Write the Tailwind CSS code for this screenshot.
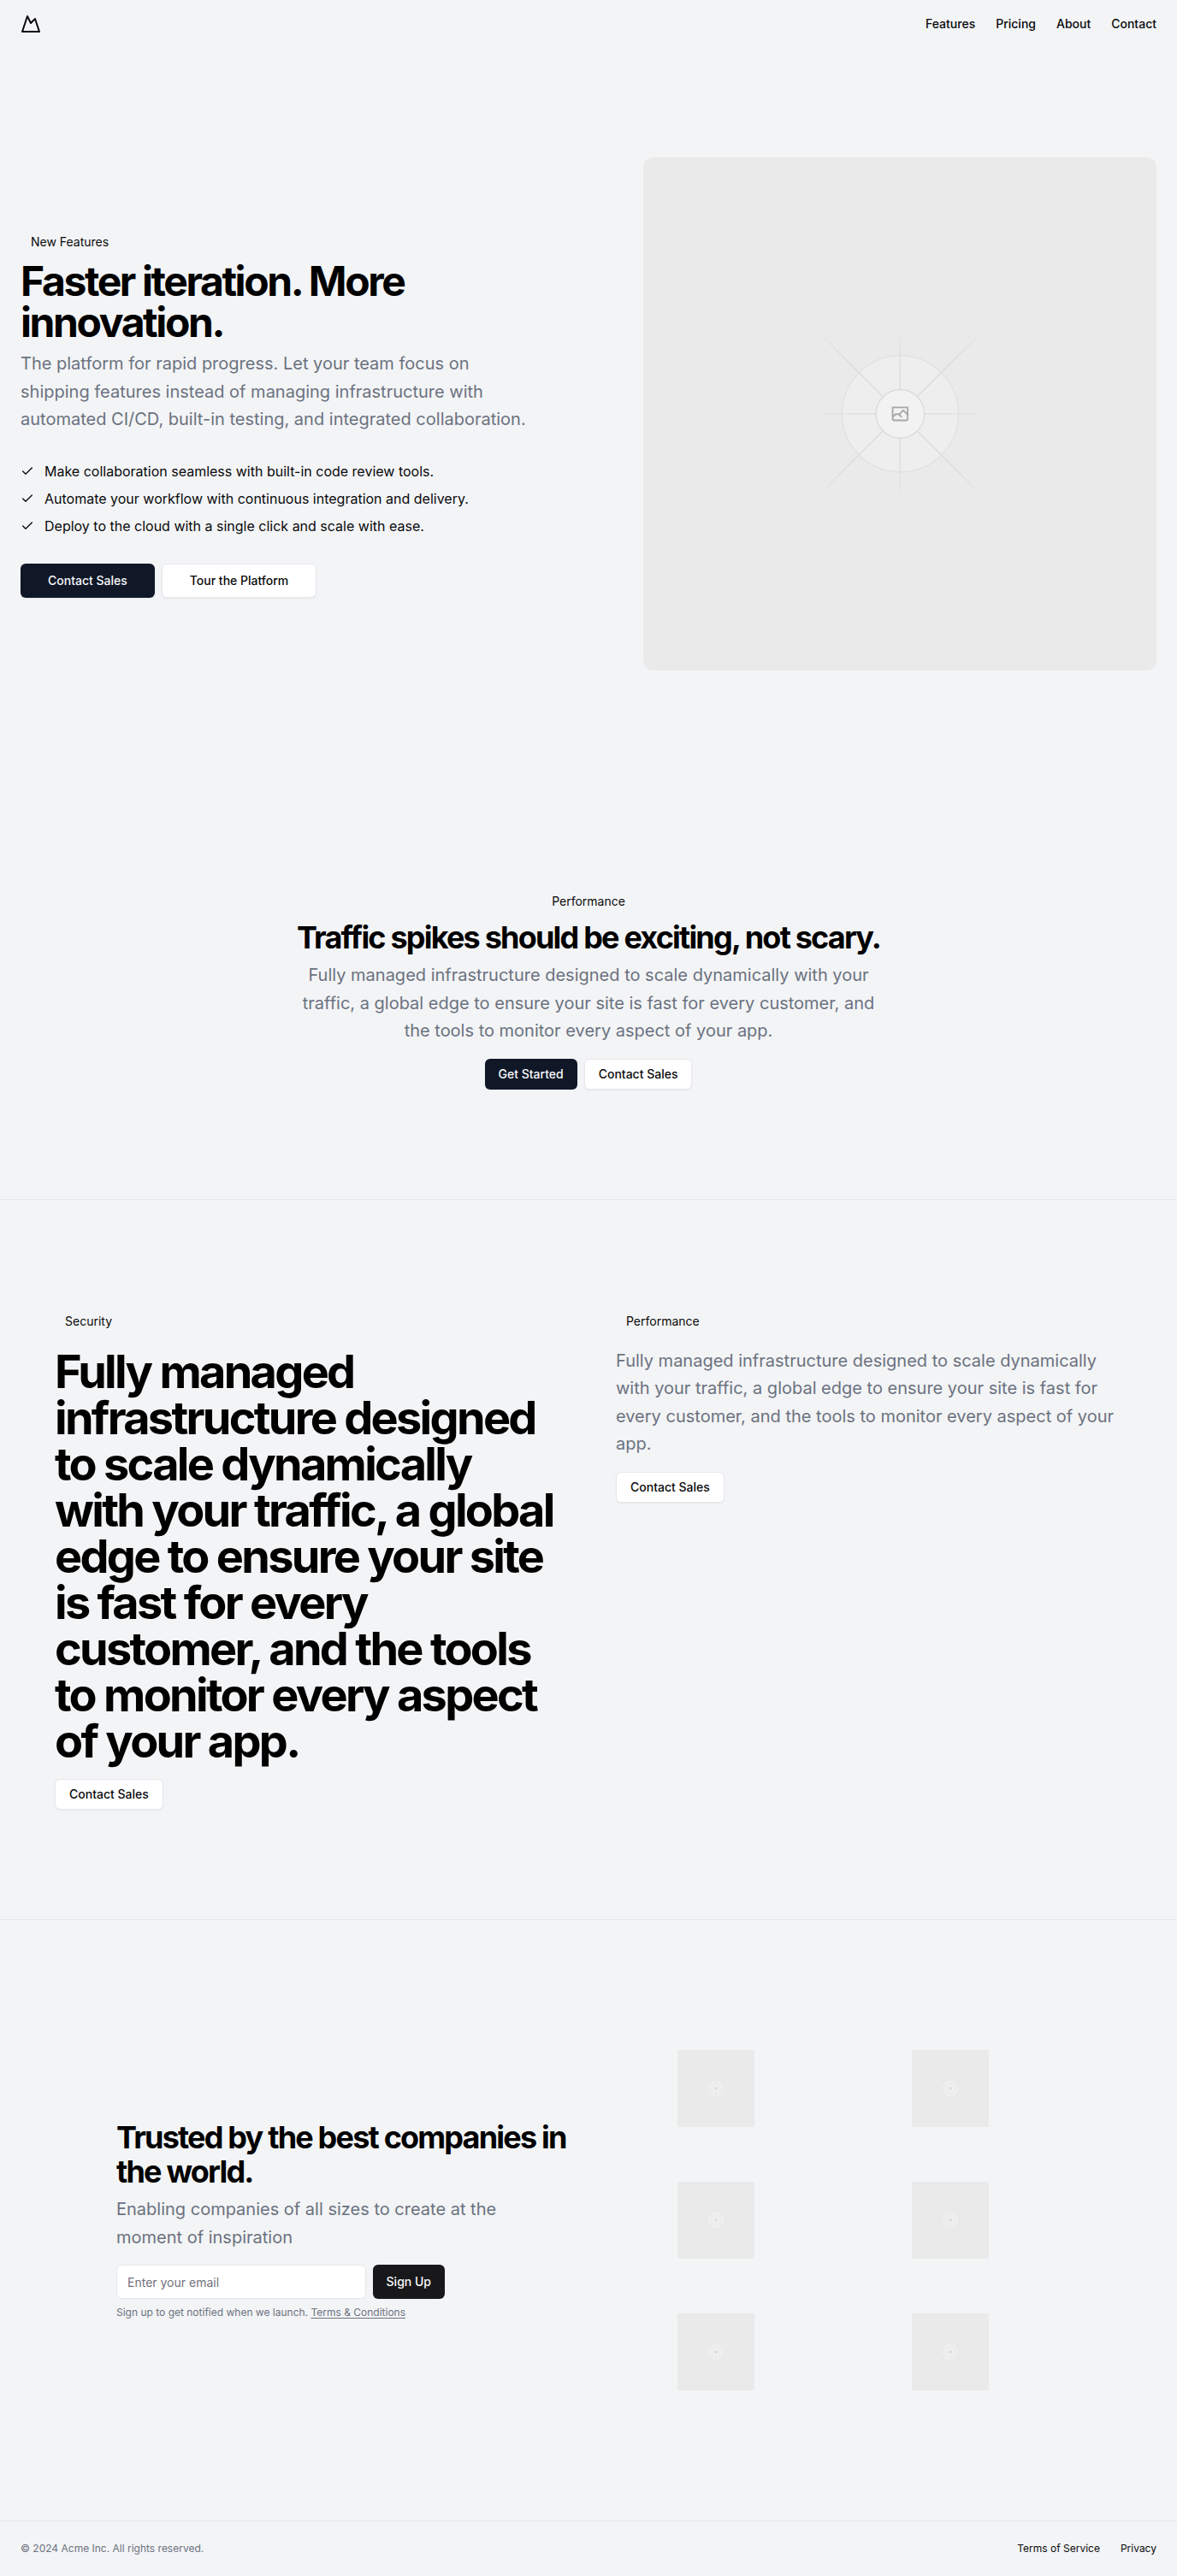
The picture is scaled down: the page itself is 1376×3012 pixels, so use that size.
<!DOCTYPE html>
<html lang="en">
<head>
<meta charset="utf-8">
<meta name="viewport" content="width=device-width, initial-scale=1">
<title>Acme Inc</title>
<script src="https://cdn.jsdelivr.net/npm/@tailwindcss/browser@4"></script>
</head>
<body class="bg-gray-100 font-['Inter',sans-serif] text-zinc-950">
<!-- Shared placeholder artwork -->
<svg class="absolute size-0" aria-hidden="true">
  <defs>
    <linearGradient id="fade-down" gradientUnits="userSpaceOnUse" x1="405" y1="404" x2="796" y2="795"><stop stop-color="#C9C9C9" stop-opacity="0"/><stop offset=".208" stop-color="#C9C9C9"/><stop offset=".792" stop-color="#C9C9C9"/><stop offset="1" stop-color="#C9C9C9" stop-opacity="0"/></linearGradient>
    <linearGradient id="fade-up" gradientUnits="userSpaceOnUse" x1="405" y1="795" x2="796" y2="404"><stop stop-color="#C9C9C9" stop-opacity="0"/><stop offset=".208" stop-color="#C9C9C9"/><stop offset=".792" stop-color="#C9C9C9"/><stop offset="1" stop-color="#C9C9C9" stop-opacity="0"/></linearGradient>
    <linearGradient id="fade-x" gradientUnits="userSpaceOnUse" x1="405" y1="599" x2="796" y2="599"><stop stop-color="#C9C9C9" stop-opacity="0"/><stop offset=".208" stop-color="#C9C9C9"/><stop offset=".792" stop-color="#C9C9C9"/><stop offset="1" stop-color="#C9C9C9" stop-opacity="0"/></linearGradient>
    <linearGradient id="fade-y" gradientUnits="userSpaceOnUse" x1="600" y1="404" x2="600" y2="795"><stop stop-color="#C9C9C9" stop-opacity="0"/><stop offset=".208" stop-color="#C9C9C9"/><stop offset=".792" stop-color="#C9C9C9"/><stop offset="1" stop-color="#C9C9C9" stop-opacity="0"/></linearGradient>
  </defs>
  <symbol id="placeholder" viewBox="0 0 1200 1200">
    <rect width="1200" height="1200" fill="#EAEAEA"/>
    <g opacity=".5">
      <circle cx="600.7" cy="599.9" r="136" fill="#FAFAFA" stroke="#C9C9C9" stroke-width="2.4" opacity=".5"/>
      <g stroke-width="2.4">
        <path stroke="url(#fade-down)" d="M405 404 796 795"/>
        <path stroke="url(#fade-up)" d="M405 795 796 404"/>
        <path stroke="url(#fade-x)" d="M405 599.5H796"/>
        <path stroke="url(#fade-y)" d="M600.7 404V795"/>
      </g>
      <circle cx="600.7" cy="599.9" r="56.5" fill="#FAFAFA" stroke="#C9C9C9" stroke-width="2.4"/>
      <path fill="#666" fill-rule="evenodd" d="M616.426 586.58h-31.434v16.176l3.553-3.554.531-.531h9.068l.074-.074 8.463-8.463h2.565l7.18 7.181V586.58Zm-15.715 14.654 3.698 3.699 1.283 1.282-2.565 2.565-1.282-1.283-5.2-5.199h-6.066l-5.514 5.514-.073.073v2.876a2.418 2.418 0 0 0 2.418 2.418h26.598a2.418 2.418 0 0 0 2.418-2.418v-8.317l-8.463-8.463-7.181 7.181-.071.072Zm-19.347 5.442v4.085a6.045 6.045 0 0 0 6.046 6.045h26.598a6.044 6.044 0 0 0 6.045-6.045v-7.108l1.356-1.355-1.282-1.283-.074-.073v-17.989h-38.689v23.43l-.146.146.146.147Z"/>
    </g>
  </symbol>
  <symbol id="check" viewBox="0 0 24 24"><path d="M20 6 9 17l-5-5" fill="none" stroke="currentColor" stroke-width="2" stroke-linecap="round" stroke-linejoin="round"/></symbol>
</svg>

<header class="flex h-14 items-center justify-between px-6">
  <a href="#" aria-label="Acme Inc">
    <svg class="size-6" viewBox="0 0 24 24" fill="none" stroke="currentColor" stroke-width="2" stroke-linecap="round" stroke-linejoin="round"><path d="m8 3 4 8 5-5 5 15H2L8 3z"/></svg>
  </a>
  <nav class="flex gap-6 text-sm font-medium">
    <a href="#">Features</a>
    <a href="#">Pricing</a>
    <a href="#">About</a>
    <a href="#">Contact</a>
  </nav>
</header>

<main>
  <section class="grid gap-12 px-6 py-32 lg:grid-cols-[1fr_600px]">
    <div class="flex flex-col justify-center gap-4">
      <div class="space-y-2">
        <div class="w-fit px-3 py-1 text-sm">New Features</div>
        <h1 class="text-5xl font-bold tracking-tighter text-black">Faster iteration. More innovation.</h1>
        <p class="max-w-[600px] text-xl/relaxed text-[#6b7280]">The platform for rapid progress. Let your team focus on shipping features instead of managing infrastructure with automated CI/CD, built-in testing, and integrated collaboration.</p>
      </div>
      <ul class="grid gap-2 py-4">
        <li class="flex items-center gap-3"><svg class="size-4"><use href="#check"/></svg>Make collaboration seamless with built-in code review tools.</li>
        <li class="flex items-center gap-3"><svg class="size-4"><use href="#check"/></svg>Automate your workflow with continuous integration and delivery.</li>
        <li class="flex items-center gap-3"><svg class="size-4"><use href="#check"/></svg>Deploy to the cloud with a single click and scale with ease.</li>
      </ul>
      <div class="flex gap-2 text-sm font-medium">
        <button class="h-10 rounded-md bg-gray-900 px-8 text-gray-50 shadow-xs">Contact Sales</button>
        <button class="h-10 rounded-md border border-gray-200 bg-white px-8 shadow-xs">Tour the Platform</button>
      </div>
    </div>
    <svg class="aspect-square w-full rounded-xl" role="img" aria-label="Hero"><use href="#placeholder"/></svg>
  </section>

  <section class="flex flex-col items-center gap-4 px-6 py-32 text-center">
    <div class="flex flex-col items-center gap-2">
      <div class="px-3 py-1 text-sm">Performance</div>
      <h2 class="text-4xl font-bold tracking-tighter text-black">Traffic spikes should be exciting, not scary.</h2>
      <p class="max-w-[700px] text-xl/relaxed text-[#6b7280]">Fully managed infrastructure designed to scale dynamically with your traffic, a global edge to ensure your site is fast for every customer, and the tools to monitor every aspect of your app.</p>
    </div>
    <div class="flex gap-2 text-sm font-medium">
      <button class="h-9 rounded-md bg-gray-900 px-4 text-gray-50 shadow-xs">Get Started</button>
      <button class="h-9 rounded-md border border-gray-200 bg-white px-4 shadow-xs">Contact Sales</button>
    </div>
  </section>

  <section class="grid gap-16 border-t border-gray-200 px-16 py-32 lg:grid-cols-2">
    <div class="flex flex-col items-start gap-4">
      <div class="px-3 py-1 text-sm">Security</div>
      <h2 class="pt-0.5 pb-px text-[54px] leading-[54px] font-bold tracking-tighter text-black">Fully managed infrastructure designed to scale dynamically with your traffic, a global edge to ensure your site is fast for every customer, and the tools to monitor every aspect of your app.</h2>
      <button class="h-9 rounded-md border border-gray-200 bg-white px-4 text-sm font-medium shadow-xs">Contact Sales</button>
    </div>
    <div class="flex flex-col items-start gap-4">
      <div class="px-3 py-1 text-sm">Performance</div>
      <p class="text-xl/relaxed text-[#6b7280]">Fully managed infrastructure designed to scale dynamically with your traffic, a global edge to ensure your site is fast for every customer, and the tools to monitor every aspect of your app.</p>
      <button class="h-9 rounded-md border border-gray-200 bg-white px-4 text-sm font-medium shadow-xs">Contact Sales</button>
    </div>
  </section>

  <section class="border-t border-gray-200 py-32">
    <div class="mx-auto grid max-w-6xl items-center gap-10 px-6 lg:grid-cols-2">
      <div class="space-y-4">
        <div class="space-y-2">
          <h2 class="text-4xl font-bold tracking-tighter text-black">Trusted by the best companies in the world.</h2>
          <p class="max-w-lg text-xl/relaxed text-[#6b7280]">Enabling companies of all sizes to create at the moment of inspiration</p>
        </div>
        <div class="max-w-sm space-y-2">
          <form class="flex gap-2 text-sm">
            <input type="email" aria-label="Email" placeholder="Enter your email" class="h-10 min-w-0 flex-1 rounded-md border border-gray-200 bg-white px-3 placeholder:text-zinc-500">
            <button type="button" class="h-10 rounded-md bg-zinc-900 px-4 font-medium text-zinc-50">Sign Up</button>
          </form>
          <p class="text-xs text-[#6b7280]">Sign up to get notified when we launch. <a href="#" class="underline underline-offset-2">Terms &amp; Conditions</a></p>
        </div>
      </div>
      <div class="grid grid-cols-2 gap-4">
        <div class="flex justify-center p-6"><svg class="size-[90px]" role="img" aria-label="Logo"><use href="#placeholder"/></svg></div>
        <div class="flex justify-center p-6"><svg class="size-[90px]" role="img" aria-label="Logo"><use href="#placeholder"/></svg></div>
        <div class="flex justify-center p-6"><svg class="size-[90px]" role="img" aria-label="Logo"><use href="#placeholder"/></svg></div>
        <div class="flex justify-center p-6"><svg class="size-[90px]" role="img" aria-label="Logo"><use href="#placeholder"/></svg></div>
        <div class="flex justify-center p-6"><svg class="size-[90px]" role="img" aria-label="Logo"><use href="#placeholder"/></svg></div>
        <div class="flex justify-center p-6"><svg class="size-[90px]" role="img" aria-label="Logo"><use href="#placeholder"/></svg></div>
      </div>
    </div>
  </section>
</main>

<footer class="flex items-center justify-between border-t border-gray-200 p-6 text-xs">
  <p class="text-[#6b7280]">© 2024 Acme Inc. All rights reserved.</p>
  <nav class="flex gap-6">
    <a href="#">Terms of Service</a>
    <a href="#">Privacy</a>
  </nav>
</footer>
</body>
</html>
